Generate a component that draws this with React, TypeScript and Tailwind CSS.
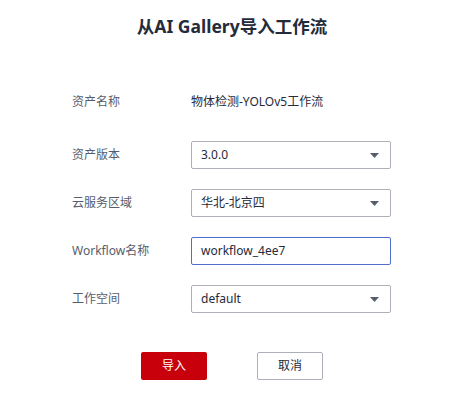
import React from 'react';

const font = { fontFamily: '"Noto Sans", "Noto Sans CJK SC", sans-serif' };

const Arrow = () => (
  <svg width="9" height="5" viewBox="0 0 9 5" className="shrink-0">
    <path d="M0 0 L9 0 L4.5 5 Z" fill="#575d6c" />
  </svg>
);

const SelectBox = ({ value }: { value: string }) => (
  <div className="w-[200px] h-[28px] border border-[#adb0b8] rounded-[2px] bg-white flex items-center justify-between pl-[9px] pr-[11px]">
    <span className="text-[12px] text-[#252b3a]">{value}</span>
    <Arrow />
  </div>
);

const Row = ({ label, children, className = '' }: { label: string; children: React.ReactNode; className?: string }) => (
  <div className={`flex items-center h-[28px] ${className}`}>
    <div className="w-[119px] text-[12px] text-[#575d6c]">{label}</div>
    {children}
  </div>
);

export default function App() {
  return (
    <div className="w-[456px] h-[420px] bg-white pl-[8px]" style={font}>
      <div className="pt-[14px] text-center text-[17.5px] font-bold text-[#252b3a] leading-[24px]">
        从AI Gallery导入工作流
      </div>

      <div className="pl-[64px] mt-[50px] flex flex-col gap-[20px]">
        <Row label="资产名称" className="mb-[5px]">
          <span className="text-[12px] text-[#252b3a]">物体检测-YOLOv5工作流</span>
        </Row>
        <Row label="资产版本">
          <SelectBox value="3.0.0" />
        </Row>
        <Row label="云服务区域">
          <SelectBox value="华北-北京四" />
        </Row>
        <Row label="Workflow名称">
          <div className="w-[200px] h-[28px] border border-[#526ecc] rounded-[2px] bg-white flex items-center pl-[9px]">
            <span className="text-[12px] text-[#252b3a]">workflow_4ee7</span>
          </div>
        </Row>
        <Row label="工作空间">
          <SelectBox value="default" />
        </Row>
      </div>

      <div className="mt-[39px] flex justify-center gap-[50px]">
        <button className="w-[66px] h-[28px] rounded-[2px] bg-[#c7000b] text-white text-[12px]">导入</button>
        <button className="w-[66px] h-[28px] rounded-[2px] border border-[#adb0b8] bg-white text-[#252b3a] text-[12px]">取消</button>
      </div>
    </div>
  );
}
